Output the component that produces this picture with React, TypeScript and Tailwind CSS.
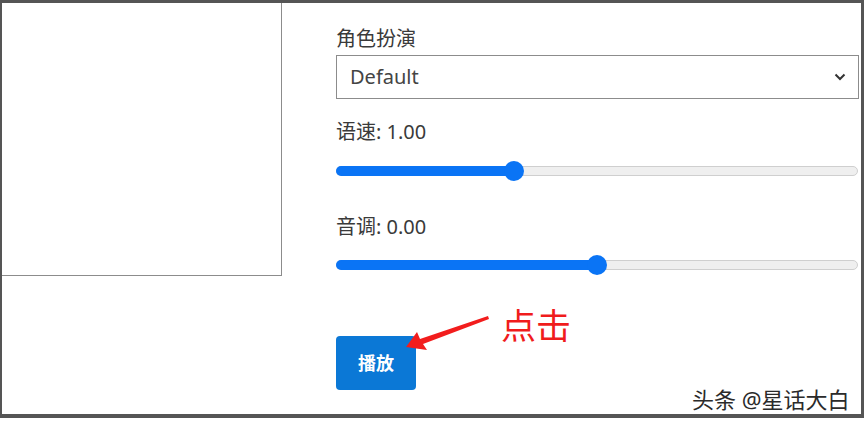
import React from "react";

const font = { fontFamily: '"Noto Sans", "Noto Sans CJK SC", sans-serif' };

function Slider({ thumb }: { thumb: number }) {
  // thumb = centre of the knob, in px from the track's left end
  return (
    <div className="relative h-5 w-[522px]">
      <div className="absolute left-0 right-0 top-[5px] h-[10px] rounded-full border border-[#cfcfcf] bg-[#efefef]" />
      <div
        className="absolute left-0 top-[5px] h-[10px] rounded-l-full bg-[#0a74f5]"
        style={{ width: thumb }}
      />
      <div
        className="absolute top-0 h-5 w-5 rounded-full bg-[#0a74f5]"
        style={{ left: thumb - 10 }}
      />
    </div>
  );
}

export default function App() {
  return (
    <div className="relative h-[425px] w-[865px] overflow-hidden bg-white" style={font}>
      <div className="flex h-[418px] w-[864px] border-b-4 border-l-2 border-r-[3px] border-t-[3px] border-[#555]">
        {/* empty preview box */}
        <div className="h-[273px] w-[280px] shrink-0 border-b border-r border-[#8c8c8c]" />

        <div className="ml-[54px] flex flex-col text-[20px] text-[#3a3a3a]">
          <div className="mt-[21px] leading-[30px]">角色扮演</div>
          <div className="mt-[1px] flex h-[44px] w-[523px] items-center justify-between border border-[#8c8c8c] pl-[13px] pr-[12px]">
            <span className="leading-none text-[#444]">Default</span>
            <svg width="12" height="8" viewBox="0 0 12 8" fill="none">
              <path d="M1.5 1.5 6 6l4.5-4.5" stroke="#333" strokeWidth="2" />
            </svg>
          </div>

          <div className="mt-[18px] leading-[30px]">语速: 1.00</div>
          <div className="mt-[14px]">
            <Slider thumb={178} />
          </div>

          <div className="mt-[31px] leading-[30px]">音调: 0.00</div>
          <div className="mt-[13px]">
            <Slider thumb={261} />
          </div>

          <button className="mt-[61px] flex h-[54px] w-[80px] items-center justify-center rounded-[4px] bg-[#0b78d6] text-[18px] font-bold text-white">
            播放
          </button>
        </div>
      </div>

      {/* annotation */}
      <svg className="pointer-events-none absolute left-0 top-0" width="865" height="425">
        <polygon
          points="406,347 417,332 420,339 488,316 489,319 423,344 427,350"
          fill="#f21d1d"
        />
      </svg>
      <div className="absolute left-[501px] top-[302px] text-[35px] leading-[48px] text-[#f01c1c]">点击</div>

      <div
        className="absolute left-[692px] top-[384px] text-[22px] leading-[30px] text-[#2a2a2a]"
        style={{ textShadow: "0 0 2px #fff, 1px 1px 1px #fff" }}
      >
        头条 @星话大白
      </div>
    </div>
  );
}
